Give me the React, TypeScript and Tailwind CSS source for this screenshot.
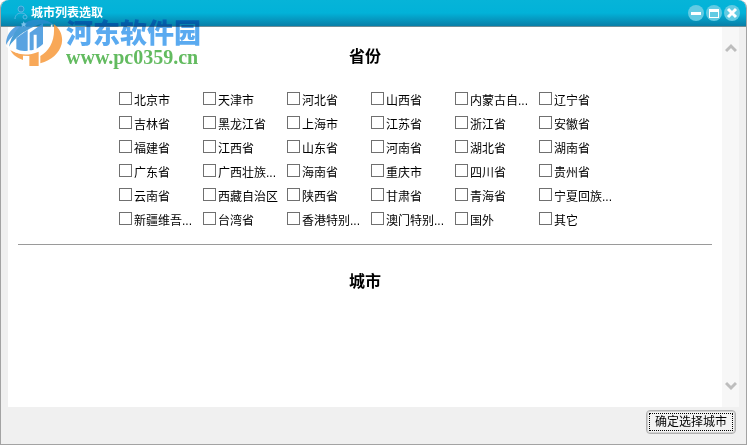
import { useState } from "react";

const provinces = [
  "北京市",
  "天津市",
  "河北省",
  "山西省",
  "内蒙古自...",
  "辽宁省",
  "吉林省",
  "黑龙江省",
  "上海市",
  "江苏省",
  "浙江省",
  "安徽省",
  "福建省",
  "江西省",
  "山东省",
  "河南省",
  "湖北省",
  "湖南省",
  "广东省",
  "广西壮族...",
  "海南省",
  "重庆市",
  "四川省",
  "贵州省",
  "云南省",
  "西藏自治区",
  "陕西省",
  "甘肃省",
  "青海省",
  "宁夏回族...",
  "新疆维吾...",
  "台湾省",
  "香港特别...",
  "澳门特别...",
  "国外",
  "其它",
];

function Watermark() {
  return (
    <div className="pointer-events-none absolute top-4 left-1 flex">
      <svg viewBox="0 0 174 156" className="h-[52px] w-[58px] opacity-85" aria-hidden="true">
        <path
          d="M3 86C3 62 14 42 36 30L58 30C36 46 18 62 3 86Z"
          fill="#3d93dc"
        />
        <path
          d="M60 20C88 6 126 6 146 26C126 20 106 22 86 32C56 46 28 66 12 92C18 62 34 36 60 20Z"
          fill="#2b8ed0"
        />
        <path
          d="M34 66L68 42V104C55 106 43 104 34 99Z"
          fill="#3d93dc"
        />
        <path
          d="M74 50L114 22V84C107 91 101 95 95 98V56H86V101C82 102 78 103 74 103Z"
          fill="#3d93dc"
        />
        <path
          d="M146 24C166 38 175 60 170 84C163 112 140 132 106 142V120C134 104 152 72 146 24Z"
          fill="#f79a3c"
        />
        <path
          d="M14 97C32 116 64 122 101 107V150H73V120L54 119V132C34 126 20 114 14 97Z"
          fill="#f79a3c"
        />
        <path
          d="M4 88C22 112 66 118 98 102C126 86 142 58 140 26"
          fill="none"
          stroke="#ffffff"
          strokeWidth="5"
        />
        <path
          d="M56 16L59 22L65 23L60 27L62 33L56 30L50 33L52 27L47 23L53 22Z"
          fill="#8ecdf5"
        />
      </svg>
      <div className="flex flex-col pt-[3px] pl-[3px] mix-blend-multiply">
        <span className="font-['Noto_Sans_CJK_SC',sans-serif] text-[27px] leading-[26px] font-black text-[#5aaaf0]">
          河东软件园
        </span>
        <span className="font-['Liberation_Serif',serif] text-[20px] leading-6 font-bold text-[#63bb60]">
          www.pc0359.cn
        </span>
      </div>
    </div>
  );
}

function TitleBar() {
  const windowButton =
    "flex size-4 items-center justify-center rounded-full bg-[#62cbe3] text-white";

  return (
    <header className="flex h-[27px] shrink-0 items-center gap-0.5 rounded-t-lg border-b border-[#6f8d96] bg-linear-to-b from-[#06b4d8] via-[#02b2d8] to-[#087fa8] pr-1.5 pl-3">
      <svg viewBox="0 0 16 16" className="size-4" fill="none" stroke="#58b9e4" aria-hidden="true">
        <circle cx="8" cy="4" r="3" fill="#2497cc" />
        <path d="M2 14C2 10 5 8 8 8C11 8 13 9 13 11" />
        <circle cx="12" cy="12" r="2" />
      </svg>
      <h1 className="text-xs font-bold text-white">城市列表选取</h1>
      <div className="ml-auto flex gap-0.5">
        <button type="button" aria-label="最小化" className={windowButton}>
          <svg viewBox="0 0 16 16" className="size-4">
            <path d="M3 7H13V10H3Z" fill="currentColor" />
          </svg>
        </button>
        <button type="button" aria-label="最大化" className={windowButton}>
          <svg viewBox="0 0 16 16" className="size-4">
            <path d="M3 4H13V13H3ZM4 7V12H12V7Z" fill="currentColor" fillRule="evenodd" />
          </svg>
        </button>
        <button type="button" aria-label="关闭" className={windowButton}>
          <svg viewBox="0 0 16 16" className="size-4">
            <path d="M4 4L12 12M12 4L4 12" stroke="currentColor" strokeWidth="3" />
          </svg>
        </button>
      </div>
    </header>
  );
}

function ScrollArrow({ down = false }: { down?: boolean }) {
  return (
    <button type="button" aria-label={down ? "向下滚动" : "向上滚动"}>
      <svg viewBox="0 0 12 10" className="h-2.5 w-3" fill="none" stroke="#bdbdbd" strokeWidth="3">
        <path d={down ? "M1 2L6 7L11 2" : "M1 8L6 3L11 8"} />
      </svg>
    </button>
  );
}

export default function App() {
  const [selected, setSelected] = useState<string[]>([]);

  function toggleProvince(name: string) {
    setSelected((current) =>
      current.includes(name)
        ? current.filter((item) => item !== name)
        : [...current, name]
    );
  }

  return (
    <div className="relative flex min-h-screen flex-col rounded-t-lg border-r border-b border-l border-[#a3a3a3] bg-[#f0f0f0] font-['Liberation_Sans','Noto_Sans_CJK_SC',sans-serif] text-black">
      <TitleBar />

      <div className="flex flex-1 px-[7px]">
        <main className="flex-1 bg-white px-2.5">
          <h2 className="pt-[18px] text-center text-base leading-6 font-bold">省份</h2>

          <div className="flex justify-center pt-[19px] pl-3">
            <div className="grid grid-cols-[repeat(6,84px)]">
              {provinces.map((name) => (
                <label
                  key={name}
                  className="flex h-6 items-center gap-0.5 pt-0.5 text-xs whitespace-nowrap"
                >
                  <input
                    type="checkbox"
                    checked={selected.includes(name)}
                    onChange={() => toggleProvince(name)}
                    className="mb-1.5 size-[13px] shrink-0 appearance-none border border-[#707070] bg-white checked:bg-[#0891b2]"
                  />
                  {name}
                </label>
              ))}
            </div>
          </div>

          <hr className="mt-3 border-[#9a9a9a]" />

          <h2 className="pt-[25px] text-center text-base leading-6 font-bold">城市</h2>
        </main>

        <div className="flex w-[17px] flex-col items-center justify-between bg-[#f7f7f7] py-4">
          <ScrollArrow />
          <ScrollArrow down />
        </div>
      </div>

      <footer className="flex h-[37px] shrink-0 items-start justify-end pt-[3px] pr-2.5">
        <button
          type="button"
          className="rounded border border-[#b0b0b0] bg-[#f3f3f3] p-0.5 text-xs shadow-[inset_0_0_0_1px_#d2d2d2]"
        >
          <span className="block border border-dotted border-black px-[5px] leading-4">
            确定选择城市
          </span>
        </button>
      </footer>

      <Watermark />
    </div>
  );
}
